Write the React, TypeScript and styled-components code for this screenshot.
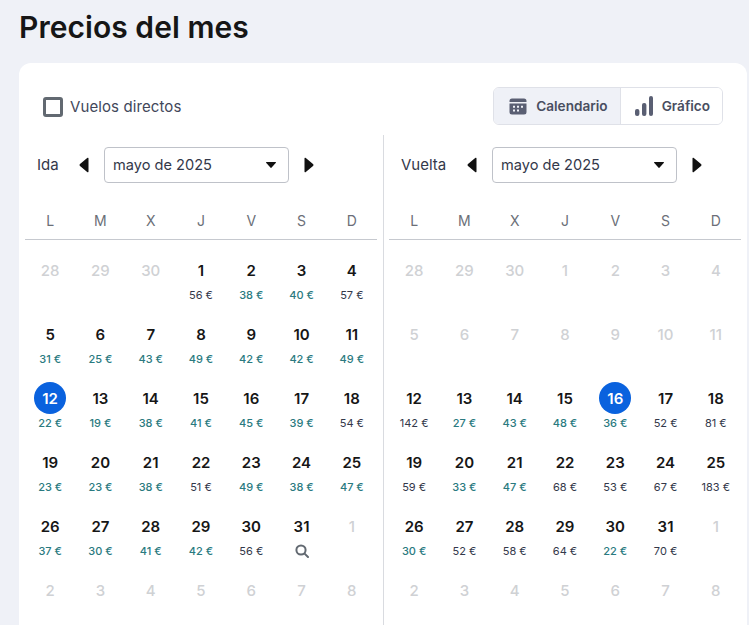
import React from "react";
import styled, { createGlobalStyle } from "styled-components";

const Global = createGlobalStyle`
  html, body { margin: 0; padding: 0; background: #eff1f7; height: 625px; overflow: hidden; }
  body { font-family: Inter, "Liberation Sans", sans-serif; color: #161616; }
`;
const Page = styled.div`
  width: 749px; height: 625px; overflow: hidden; padding: 0 2px 0 19px; box-sizing: border-box;
`;
const Title = styled.h1`
  margin: 0; height: 63px; padding-top: 9px; box-sizing: border-box;
  font-size: 30px; line-height: 36px; font-weight: 600; letter-spacing: 0.05px; color: #161616;
`;
const Card = styled.section`
  background: #fff; border-radius: 12px 12px 0 0; height: 562px; box-sizing: border-box;
  padding: 24px 6px 0;
`;
const TopBar = styled.div`
  display: flex; justify-content: space-between; align-items: center;
  height: 38px; padding: 0 18px 0 18px; margin-bottom: 10px;
`;
const CheckLabel = styled.label`
  display: flex; align-items: center; gap: 7px; font-size: 15px; letter-spacing: 0.1px; line-height: 18px; color: #42475a; margin-top: 2px;
`;
const CheckBox = styled.span`
  width: 20px; height: 20px; box-sizing: border-box; border: 3px solid #626971; border-radius: 3px;
`;
const CheckText = styled.span`
  padding-top: 0;
`;
const Toggle = styled.div`
  display: flex; height: 38px; border: 1px solid #dfe1e8; border-radius: 6px; overflow: hidden; box-sizing: border-box;
`;
const ToggleButton = styled.div<{ $active?: boolean }>`
  display: flex; align-items: center; gap: 9px; padding: 0 12px 0 ${p => (p.$active ? 15 : 14)}px;
  background: ${p => (p.$active ? "#eff1f7" : "#fff")};
  border-left: ${p => (p.$active ? "0" : "1px solid #dfe1e8")};
  font-size: 13.6px; font-weight: 600; color: #494e60;
`;
const Columns = styled.div`
  display: grid; grid-template-columns: 358px 1px 358px; height: 490px;
`;
const Divider = styled.div`
  background: #d9dbe0;
`;
const Column = styled.div<{ $right?: boolean }>`
  padding: ${p => (p.$right ? "0 1px 0 5px" : "0 6px 0 0")};
`;
const NavRow = styled.div`
  display: flex; align-items: center; height: 36px; margin-top: 12px; font-size: 15px; color: #33384a;
`;
const NavLabel = styled.span<{ $w: number }>`
  width: ${p => p.$w}px; padding: 0 0 1px 12px; box-sizing: border-box;
`;
const Arrow = styled.svg`
  width: 12px; height: 16px; flex: none; fill: #111;
`;
const Select = styled.div`
  width: 185px; height: 36px; box-sizing: border-box; margin: 0 14px 0 14px;
  border: 1px solid #bfc2c9; border-radius: 4px; display: flex; align-items: center; justify-content: space-between;
  padding: 0 12px 1px 8px; font-size: 14.6px; color: #33384a;
`;
const Caret = styled.svg`
  width: 10px; height: 6px; fill: #111; margin-top: 1px;
`;
const WeekRow = styled.div`
  display: grid; grid-template-columns: repeat(7, 1fr); height: 39px; margin-top: 18px; align-items: center;
  border-bottom: 1px solid #c6c9cf; padding-bottom: 0; box-sizing: border-box;
`;
const WeekDay = styled.span`
  text-align: center; font-size: 14px; color: #6b6f78;
`;
const Month = styled.div`
  display: grid; grid-template-columns: repeat(7, 1fr); grid-auto-rows: 64px; padding-top: 14px;
`;
const Cell = styled.div`
  display: flex; flex-direction: column; align-items: center;
`;
const Day = styled.span<{ $muted?: boolean; $selected?: boolean }>`
  width: 32px; height: 32px; border-radius: 50%; display: flex; align-items: center; justify-content: center;
  font-size: 15px; font-weight: ${p => (p.$muted ? 500 : 600)};
  color: ${p => (p.$selected ? "#fff" : p.$muted ? "#cfd1d4" : "#161616")};
  background: ${p => (p.$selected ? "#0a62de" : "transparent")};
`;
const Price = styled.span<{ $low?: boolean }>`
  font-size: 11px; line-height: 13px; margin-top: 3px;
  font-weight: ${p => (p.$low ? 500 : 400)};
  color: ${p => (p.$low ? "#2a7a80" : "#33384a")};
`;
const SearchIcon = styled.svg`
  width: 14px; height: 14px; margin-top: 2px; fill: none; stroke: #626971; stroke-width: 2; stroke-linecap: round;
`;

type D = [string, string?, boolean?];
const mute = (s: string): D[] => s.split(" ").map(n => [n]);
const active = (items: string): D[] => items.split(" ").map(t => {
  const [n, p] = t.split(":");
  const low = p?.endsWith("*");
  return [n, p ? p.replace("*", "") + " €" : undefined, low];
});
const idaDays: D[] = [
  ...mute("28 29 30"),
  ...active("1:56 2:38* 3:40* 4:57 5:31* 6:25* 7:43* 8:49* 9:42* 10:42* 11:49* 12:22* 13:19* 14:38* 15:41* 16:45* 17:39* 18:54 19:23* 20:23* 21:38* 22:51 23:49* 24:38* 25:47* 26:37* 27:30* 28:41* 29:42* 30:56"),
  ["31", "search"],
  ...mute("1 2 3 4 5 6 7 8"),
];
const vueltaDays: D[] = [
  ...mute("28 29 30 1 2 3 4 5 6 7 8 9 10 11"),
  ...active("12:142 13:27* 14:43* 15:48* 16:36* 17:52 18:81 19:59 20:33* 21:47* 22:68 23:53 24:67 25:183 26:30* 27:52 28:58 29:64 30:22* 31:70"),
  ...mute("1 2 3 4 5 6 7 8"),
];
const week = ["L", "M", "X", "J", "V", "S", "D"];

function MonthPanel({ label, labelWidth, days, selected, right }: { label: string; labelWidth: number; days: D[]; selected: string; right?: boolean }) {
  return (
    <Column $right={right}>
      <NavRow>
        <NavLabel $w={labelWidth}>{label}</NavLabel>
        <Arrow viewBox="0 0 12 16"><path d="M10.5 1.5v13a.8.8 0 0 1-1.3.6L2 9a1.3 1.3 0 0 1 0-2l7.2-6.1a.8.8 0 0 1 1.3.6z" /></Arrow>
        <Select>
          mayo de 2025
          <Caret viewBox="0 0 10 6"><path d="M.5 0h9c.4 0 .6.4.4.7L5.4 5.7a.6.6 0 0 1-.8 0L.1.7C-.1.4.1 0 .5 0z" /></Caret>
        </Select>
        <Arrow viewBox="0 0 12 16"><path d="M1.5 1.5v13a.8.8 0 0 0 1.3.6L10 9a1.3 1.3 0 0 0 0-2L2.8.9a.8.8 0 0 0-1.3.6z" /></Arrow>
      </NavRow>
      <WeekRow>{week.map(w => <WeekDay key={w}>{w}</WeekDay>)}</WeekRow>
      <Month>
        {days.map(([n, p, low], i) => {
          const muted = !p;
          const isSel = n === selected && !muted;
          return (
            <Cell key={i}>
              <Day $muted={muted} $selected={isSel}>{n}</Day>
              {p === "search" ? (
                <SearchIcon viewBox="0 0 14 14"><circle cx="6" cy="6" r="4.6" /><path d="M9.6 9.6L13 13" /></SearchIcon>
              ) : p ? <Price $low={low}>{p}</Price> : null}
            </Cell>
          );
        })}
      </Month>
    </Column>
  );
}

export default function App() {
  return (
    <Page>
      <Global />
      <Title>Precios del mes</Title>
      <Card>
        <TopBar>
          <CheckLabel><CheckBox /><CheckText>Vuelos directos</CheckText></CheckLabel>
          <Toggle>
            <ToggleButton $active>
              <svg width="18" height="18" viewBox="0 0 18 18" fill="#5a5f73">
                <path fillRule="evenodd" d="M3 1.5h12A2.5 2.5 0 0 1 17.5 4v1H.5V4A2.5 2.5 0 0 1 3 1.5zM.5 6.5h17V15a2.5 2.5 0 0 1-2.5 2.5H3A2.5 2.5 0 0 1 .5 15zM4 8.7v2h2v-2zm4 0v2h2v-2zm4 0v2h2v-2zM4 12.5v2h2v-2zm4 0v2h2v-2z" />
              </svg>
              Calendario
            </ToggleButton>
            <ToggleButton>
              <svg width="18" height="20" viewBox="0 0 18 20" fill="#5a5f73">
                <rect x="0" y="13" width="4.4" height="7" rx="2" />
                <rect x="7" y="7" width="4.4" height="13" rx="2" />
                <rect x="14" y="0" width="4" height="20" rx="2" />
              </svg>
              Gráfico
            </ToggleButton>
          </Toggle>
        </TopBar>
        <Columns>
          <MonthPanel label="Ida" labelWidth={53} days={idaDays} selected="12" />
          <Divider />
          <MonthPanel label="Vuelta" labelWidth={77} days={vueltaDays} selected="16" right />
        </Columns>
      </Card>
    </Page>
  );
}
